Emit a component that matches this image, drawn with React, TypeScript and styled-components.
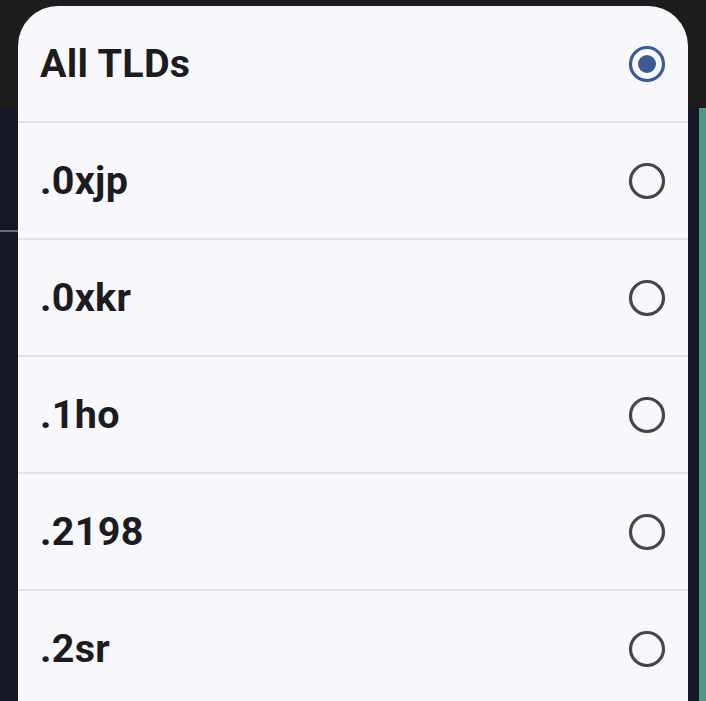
import React from "react";
import styled, { createGlobalStyle } from "styled-components";

const Global = createGlobalStyle`
  html, body { margin: 0; padding: 0; }
  body { width: 706px; height: 701px; overflow: hidden; font-family: Roboto, "Noto Sans", sans-serif; }
`;

const Page = styled.div`
  position: relative;
  width: 706px;
  height: 701px;
  display: flex;
  flex-direction: column;
  background: #131726;
  overflow: hidden;
`;

const TopBar = styled.div`
  height: 108px;
  flex: none;
  background: #1d1d1d;
`;

const Content = styled.div`
  flex: 1;
  display: flex;
`;

const Main = styled.div`
  flex: 1;
  display: flex;
  flex-direction: column;
`;

const Spacer = styled.div`
  height: 122px;
  flex: none;
`;

const Rule = styled.div`
  height: 2px;
  background: #6f7077;
`;

const Gap = styled.div`
  width: 11px;
  flex: none;
`;

const Accent = styled.div`
  width: 7px;
  flex: none;
  background: #4c9a84;
`;

const Dialog = styled.div`
  position: absolute;
  top: 6px;
  left: 18px;
  width: 670px;
  height: 760px;
  background: #f8f8fc;
  border-radius: 40px 40px 0 0;
  display: flex;
  flex-direction: column;
`;

const Row = styled.div<{ $first?: boolean }>`
  height: 115px;
  flex: none;
  display: flex;
  align-items: center;
  justify-content: space-between;
  padding: 0 22px 0 22px;
  border-top: ${(p) => (p.$first ? "none" : "2px solid #e2e2e6")};
`;

const Label = styled.span`
  font-family: Roboto, sans-serif;
  font-weight: 700;
  font-size: 39.5px;
  color: #1c1b1f;
  letter-spacing: 0.3px;
`;

const RadioBox = styled.svg`
  width: 38px;
  height: 38px;
  flex: none;
`;

function Radio({ checked }: { checked: boolean }) {
  return (
    <RadioBox viewBox="0 0 38 38">
      <circle cx="19" cy="19" r="16.5" fill="none" stroke={checked ? "#3e5a95" : "#45454a"} strokeWidth="3.2" />
      {checked && <circle cx="19" cy="19" r="9" fill="#3e5a95" />}
    </RadioBox>
  );
}

const items = ["All TLDs", ".0xjp", ".0xkr", ".1ho", ".2198", ".2sr"];

export default function App() {
  return (
    <>
      <Global />
      <Page>
        <TopBar />
        <Content>
          <Main>
            <Spacer />
            <Rule />
          </Main>
          <Gap />
          <Accent />
        </Content>
        <Dialog>
          {items.map((t, i) => (
            <Row key={t} $first={i === 0}>
              <Label>{t}</Label>
              <Radio checked={i === 0} />
            </Row>
          ))}
        </Dialog>
      </Page>
    </>
  );
}
